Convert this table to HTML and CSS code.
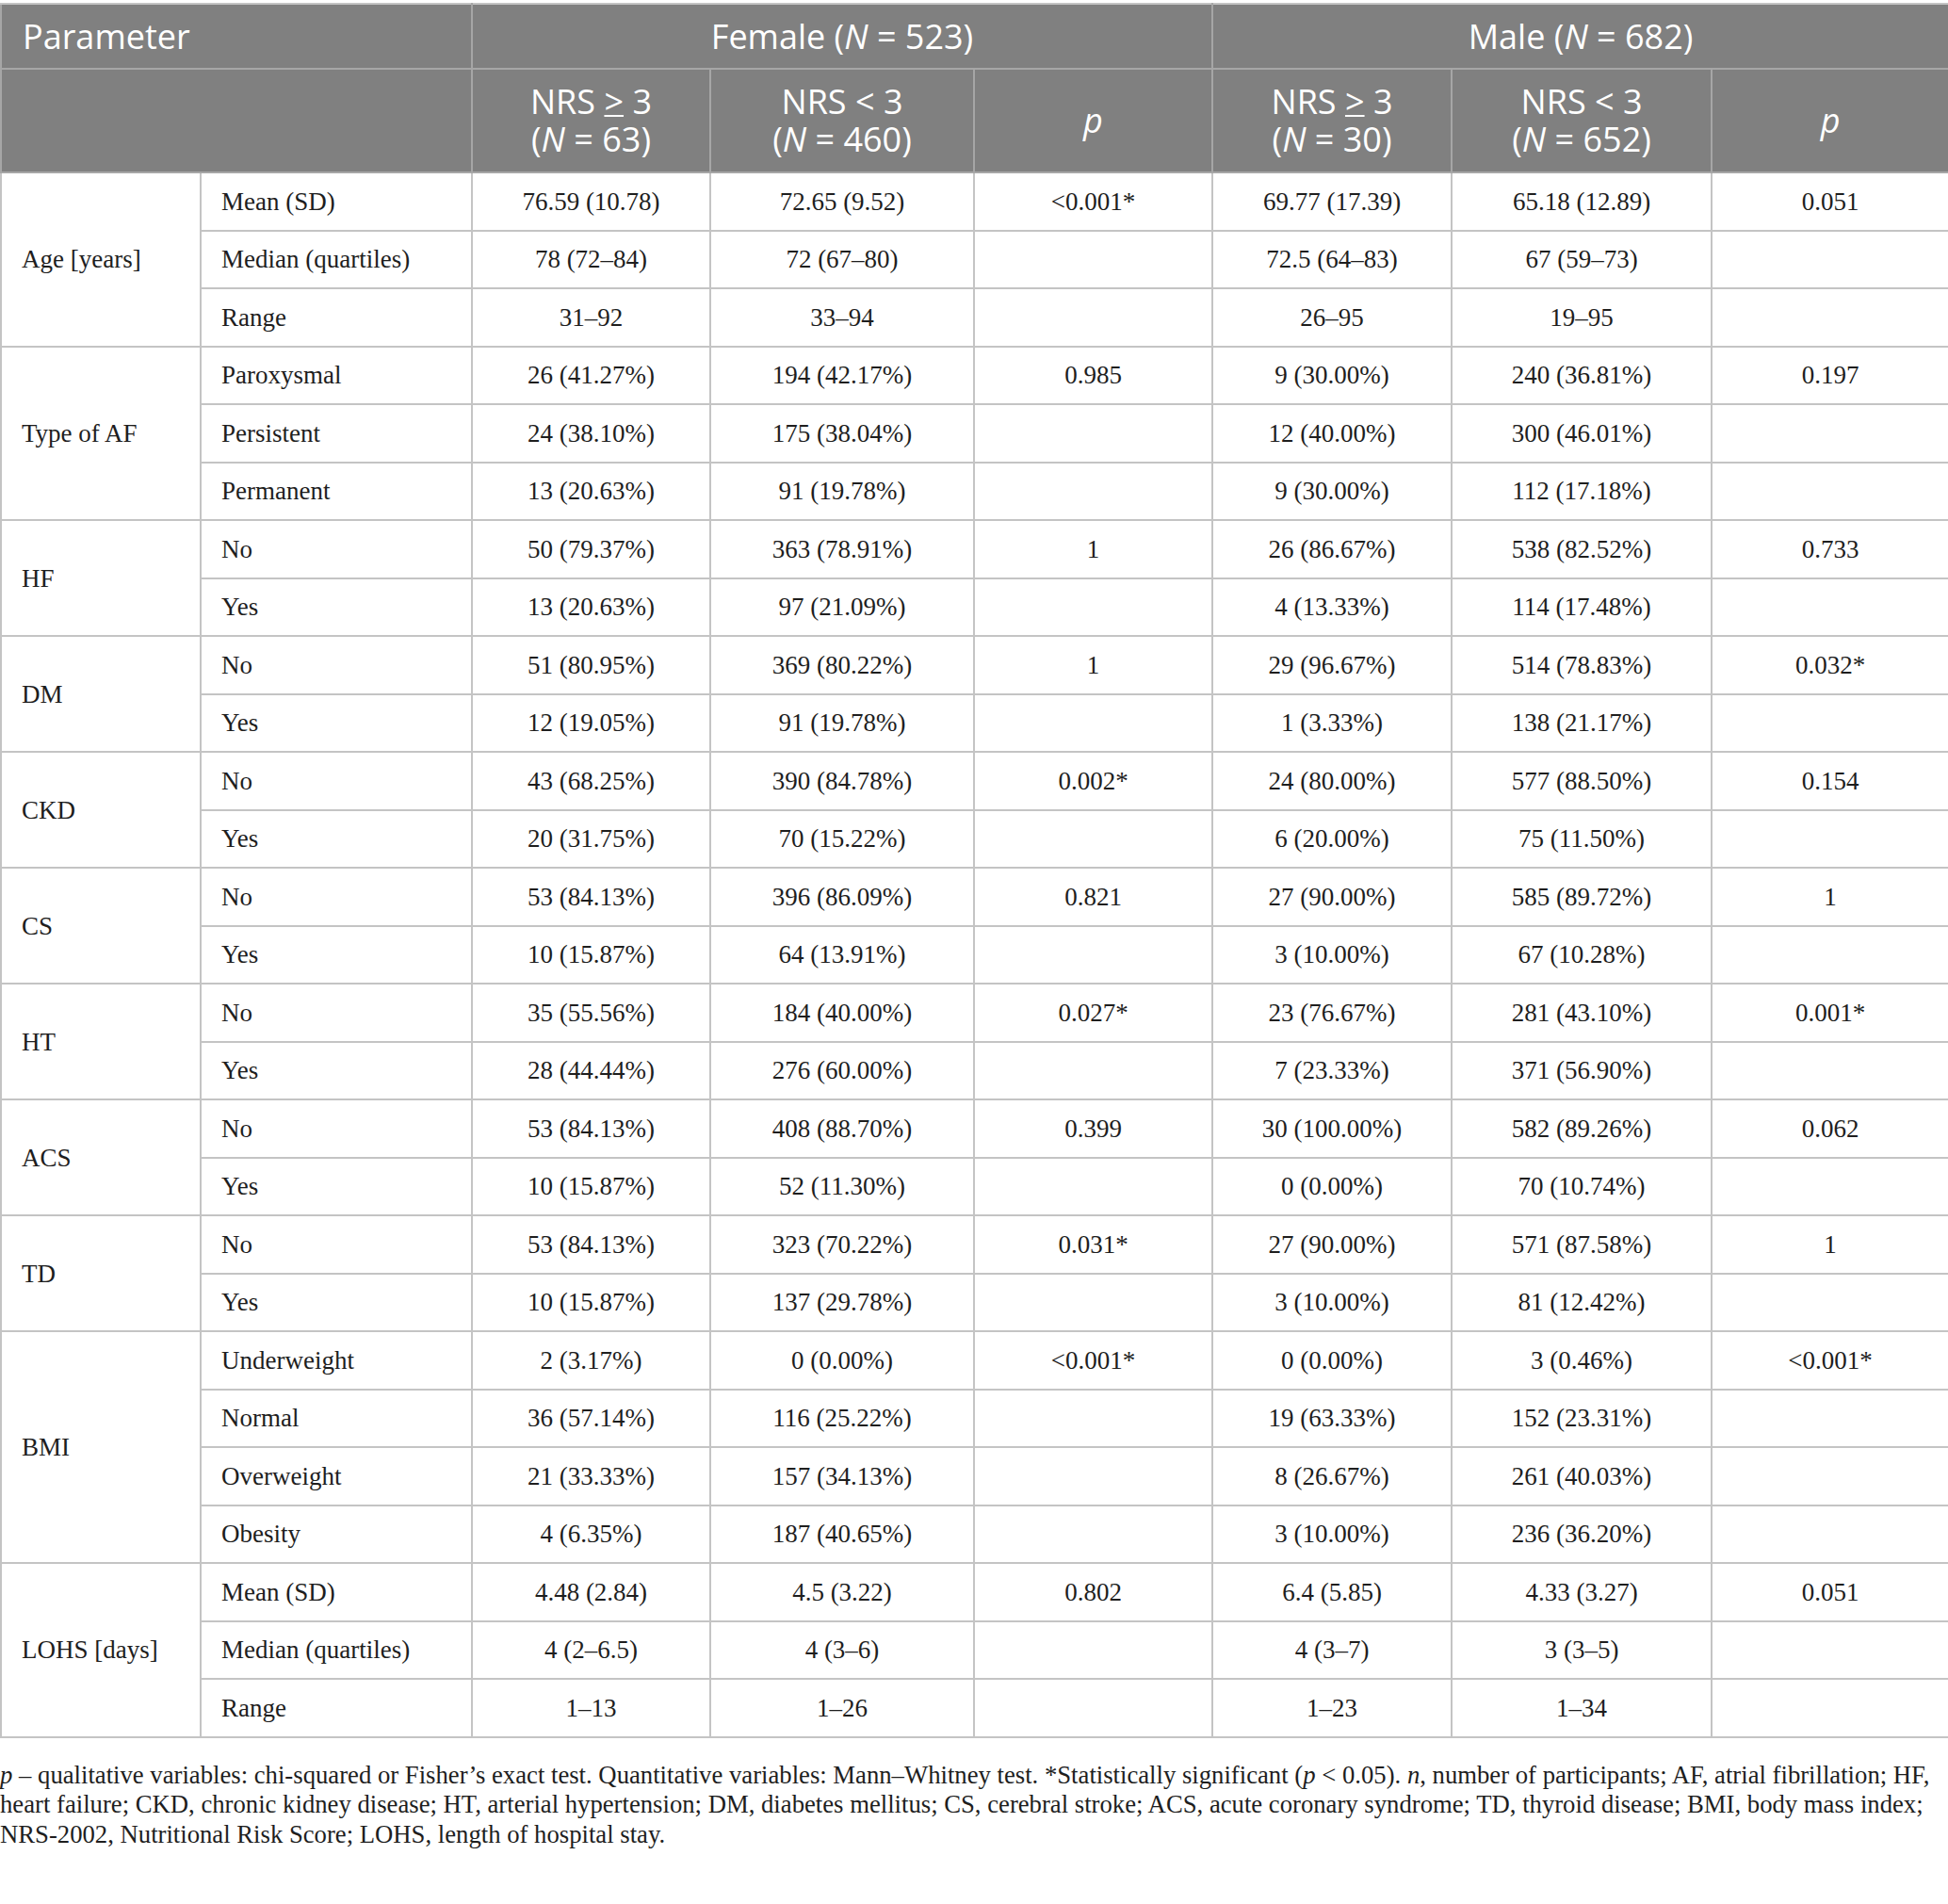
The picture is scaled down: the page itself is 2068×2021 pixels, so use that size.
FILE: index.html
```html
<!DOCTYPE html>
<html>
<head>
<meta charset="utf-8">
<link rel="stylesheet" href="styles.css">
</head>
<body>
<table class="tbl">
<colgroup>
<col class="c1"><col class="c2"><col class="c3"><col class="c4"><col class="c5"><col class="c6"><col class="c7"><col class="c8">
</colgroup>
<thead>
<tr class="h1">
<th class="hl" colspan="2">Parameter</th>
<th colspan="3">Female (<i>N</i> = 523)</th>
<th colspan="3">Male (<i>N</i> = 682)</th>
</tr>
<tr class="h2">
<th colspan="2"></th>
<th>NRS <u>&gt;</u> 3<br>(<i>N</i> = 63)</th>
<th>NRS &lt; 3<br>(<i>N</i> = 460)</th>
<th><i>p</i></th>
<th>NRS <u>&gt;</u> 3<br>(<i>N</i> = 30)</th>
<th>NRS &lt; 3<br>(<i>N</i> = 652)</th>
<th><i>p</i></th>
</tr>
</thead>
<tbody>
<tr><td class="g" rowspan="3">Age [years]</td><td class="s">Mean (SD)</td><td>76.59 (10.78)</td><td>72.65 (9.52)</td><td>&lt;0.001*</td><td>69.77 (17.39)</td><td>65.18 (12.89)</td><td>0.051</td></tr>
<tr><td class="s">Median (quartiles)</td><td>78 (72–84)</td><td>72 (67–80)</td><td></td><td>72.5 (64–83)</td><td>67 (59–73)</td><td></td></tr>
<tr><td class="s">Range</td><td>31–92</td><td>33–94</td><td></td><td>26–95</td><td>19–95</td><td></td></tr>

<tr><td class="g" rowspan="3">Type of AF</td><td class="s">Paroxysmal</td><td>26 (41.27%)</td><td>194 (42.17%)</td><td>0.985</td><td>9 (30.00%)</td><td>240 (36.81%)</td><td>0.197</td></tr>
<tr><td class="s">Persistent</td><td>24 (38.10%)</td><td>175 (38.04%)</td><td></td><td>12 (40.00%)</td><td>300 (46.01%)</td><td></td></tr>
<tr><td class="s">Permanent</td><td>13 (20.63%)</td><td>91 (19.78%)</td><td></td><td>9 (30.00%)</td><td>112 (17.18%)</td><td></td></tr>

<tr><td class="g" rowspan="2">HF</td><td class="s">No</td><td>50 (79.37%)</td><td>363 (78.91%)</td><td>1</td><td>26 (86.67%)</td><td>538 (82.52%)</td><td>0.733</td></tr>
<tr><td class="s">Yes</td><td>13 (20.63%)</td><td>97 (21.09%)</td><td></td><td>4 (13.33%)</td><td>114 (17.48%)</td><td></td></tr>

<tr><td class="g" rowspan="2">DM</td><td class="s">No</td><td>51 (80.95%)</td><td>369 (80.22%)</td><td>1</td><td>29 (96.67%)</td><td>514 (78.83%)</td><td>0.032*</td></tr>
<tr><td class="s">Yes</td><td>12 (19.05%)</td><td>91 (19.78%)</td><td></td><td>1 (3.33%)</td><td>138 (21.17%)</td><td></td></tr>

<tr><td class="g" rowspan="2">CKD</td><td class="s">No</td><td>43 (68.25%)</td><td>390 (84.78%)</td><td>0.002*</td><td>24 (80.00%)</td><td>577 (88.50%)</td><td>0.154</td></tr>
<tr><td class="s">Yes</td><td>20 (31.75%)</td><td>70 (15.22%)</td><td></td><td>6 (20.00%)</td><td>75 (11.50%)</td><td></td></tr>

<tr><td class="g" rowspan="2">CS</td><td class="s">No</td><td>53 (84.13%)</td><td>396 (86.09%)</td><td>0.821</td><td>27 (90.00%)</td><td>585 (89.72%)</td><td>1</td></tr>
<tr><td class="s">Yes</td><td>10 (15.87%)</td><td>64 (13.91%)</td><td></td><td>3 (10.00%)</td><td>67 (10.28%)</td><td></td></tr>

<tr><td class="g" rowspan="2">HT</td><td class="s">No</td><td>35 (55.56%)</td><td>184 (40.00%)</td><td>0.027*</td><td>23 (76.67%)</td><td>281 (43.10%)</td><td>0.001*</td></tr>
<tr><td class="s">Yes</td><td>28 (44.44%)</td><td>276 (60.00%)</td><td></td><td>7 (23.33%)</td><td>371 (56.90%)</td><td></td></tr>

<tr><td class="g" rowspan="2">ACS</td><td class="s">No</td><td>53 (84.13%)</td><td>408 (88.70%)</td><td>0.399</td><td>30 (100.00%)</td><td>582 (89.26%)</td><td>0.062</td></tr>
<tr><td class="s">Yes</td><td>10 (15.87%)</td><td>52 (11.30%)</td><td></td><td>0 (0.00%)</td><td>70 (10.74%)</td><td></td></tr>

<tr><td class="g" rowspan="2">TD</td><td class="s">No</td><td>53 (84.13%)</td><td>323 (70.22%)</td><td>0.031*</td><td>27 (90.00%)</td><td>571 (87.58%)</td><td>1</td></tr>
<tr><td class="s">Yes</td><td>10 (15.87%)</td><td>137 (29.78%)</td><td></td><td>3 (10.00%)</td><td>81 (12.42%)</td><td></td></tr>

<tr><td class="g" rowspan="4">BMI</td><td class="s">Underweight</td><td>2 (3.17%)</td><td>0 (0.00%)</td><td>&lt;0.001*</td><td>0 (0.00%)</td><td>3 (0.46%)</td><td>&lt;0.001*</td></tr>
<tr><td class="s">Normal</td><td>36 (57.14%)</td><td>116 (25.22%)</td><td></td><td>19 (63.33%)</td><td>152 (23.31%)</td><td></td></tr>
<tr><td class="s">Overweight</td><td>21 (33.33%)</td><td>157 (34.13%)</td><td></td><td>8 (26.67%)</td><td>261 (40.03%)</td><td></td></tr>
<tr><td class="s">Obesity</td><td>4 (6.35%)</td><td>187 (40.65%)</td><td></td><td>3 (10.00%)</td><td>236 (36.20%)</td><td></td></tr>

<tr><td class="g" rowspan="3">LOHS [days]</td><td class="s">Mean (SD)</td><td>4.48 (2.84)</td><td>4.5 (3.22)</td><td>0.802</td><td>6.4 (5.85)</td><td>4.33 (3.27)</td><td>0.051</td></tr>
<tr><td class="s">Median (quartiles)</td><td>4 (2–6.5)</td><td>4 (3–6)</td><td></td><td>4 (3–7)</td><td>3 (3–5)</td><td></td></tr>
<tr><td class="s">Range</td><td>1–13</td><td>1–26</td><td></td><td>1–23</td><td>1–34</td><td></td></tr>
</tbody>
</table>
<p class="note"><i>p</i> – qualitative variables: chi-squared or Fisher’s exact test. Quantitative variables: Mann–Whitney test. *Statistically significant (<i>p</i> &lt; 0.05). <i>n</i>, number of participants; AF, atrial fibrillation; HF,<br>heart failure; CKD, chronic kidney disease; HT, arterial hypertension; DM, diabetes mellitus; CS, cerebral stroke; ACS, acute coronary syndrome; TD, thyroid disease; BMI, body mass index;<br>NRS-2002, Nutritional Risk Score; LOHS, length of hospital stay.</p>
</body>
</html>
```

FILE: styles.css
```css
html, body {
  margin: 0;
  padding: 0;
  background: #ffffff;
}
body {
  padding-top: 3px;
  font-family: "Liberation Serif", "Times New Roman", serif;
  color: #1e1e1e;
}
.tbl {
  width: 2068px;
  border-collapse: collapse;
  table-layout: fixed;
  border: 2px solid #c4c4c4;
}
.c1 { width: 212px; }
.c2 { width: 288px; }
.c3 { width: 253px; }
.c4 { width: 280px; }
.c5 { width: 253px; }
.c6 { width: 254px; }
.c7 { width: 276px; }
.c8 { width: 252px; }
thead th {
  background: #808080;
  color: #ffffff;
  font-family: "Open Sans", "Noto Sans", sans-serif;
  font-weight: 400;
  font-size: 36px;
  line-height: 40px;
  text-align: center;
  border: 2px solid #a6a6a6;
  padding: 0 10px;
}
thead th i { font-style: italic; }
thead th u {
  text-decoration-thickness: 2px;
  text-underline-offset: 1px;
}
.tbl thead tr:first-child th { border-top: 2px solid #c4c4c4; }
.h1 { height: 69px; }
.h2 { height: 110px; }
thead th.hl { text-align: left; padding-left: 22px; }
tbody td {
  border: 2px solid #c4c4c4;
  font-size: 27px;
  line-height: 30px;
  text-align: center;
  padding: 0 8px;
  height: 59.5px;
}
tbody td.g, tbody td.s {
  text-align: left;
  padding-left: 21px;
}
.note {
  margin: 24px 0 0 0;
  font-size: 26.7px;
  line-height: 31.7px;
  white-space: nowrap;
  color: #1e1e1e;
}
```
